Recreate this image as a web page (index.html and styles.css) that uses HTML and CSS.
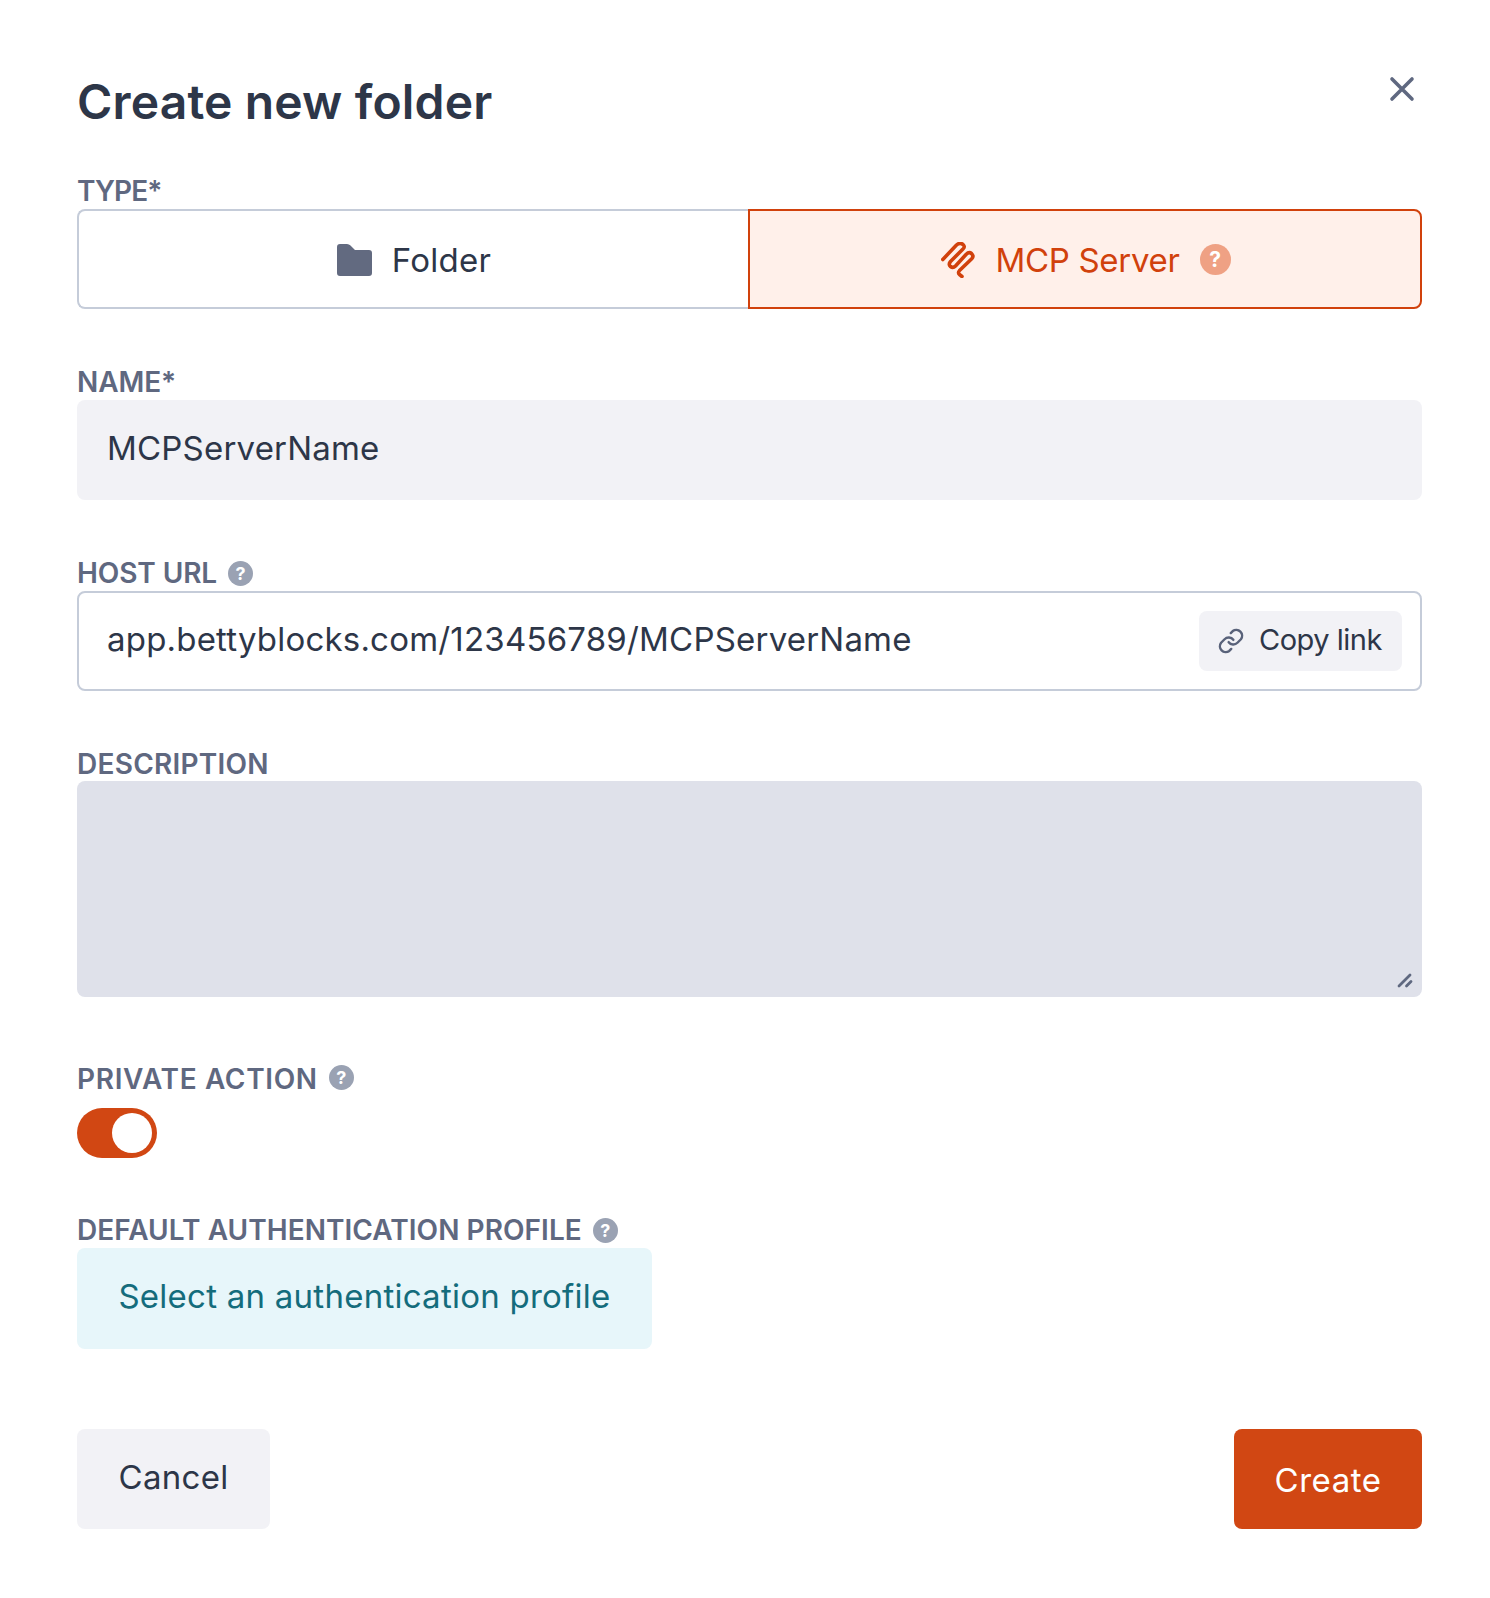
FILE: index.html
```html
<!DOCTYPE html>
<html lang="en">
<head>
  <meta charset="UTF-8">
  <title>Create new folder</title>
  <link rel="stylesheet" href="styles.css">
</head>
<body>
  <div class="dialog">
    <div class="dialog-head">
      <h1>Create new folder</h1>
      <button class="close-btn" aria-label="Close">
        <svg width="26" height="26" viewBox="0 0 26 26"><path d="M3 3 L23 23 M23 3 L3 23" stroke="#5f6880" stroke-width="3.6" stroke-linecap="round" fill="none"/></svg>
      </button>
    </div>

    <div class="field">
      <label class="field-label label-tight">TYPE*</label>
      <div class="type-switch">
        <div class="type-option">
          <svg class="type-icon" width="35" height="32" viewBox="0 0 35 32"><path d="M0 3 Q0 0 3 0 H10 Q12 0 13.5 1.5 L18 6 H32 Q35 6 35 9 V29 Q35 32 32 32 H3 Q0 32 0 29 Z" fill="#626a80"/></svg>
          <span>Folder</span>
        </div>
        <div class="type-option active">
          <svg class="type-icon" width="34" height="36" viewBox="0 0 34 36"><path d="M1.8 17.5 L15.5 3 Q19 0 22 2.5 Q24.5 4.8 22 7 L9.5 19.5 Q7 22.5 9.5 24.5 Q12 26.5 14.5 24 L25 12.500 Q28 9.500 30.500 11.500 Q33 14 31 16.500 L18.5 28.5 Q16.5 31 18.5 32.5 L21 34.5" stroke="#d1410c" stroke-width="3.6" stroke-linecap="round" stroke-linejoin="round" fill="none"/></svg>
          <span>MCP Server</span>
          <span class="help help-big">?</span>
        </div>
      </div>
    </div>

    <div class="field">
      <label class="field-label">NAME*</label>
      <div class="text-input filled">MCPServerName</div>
    </div>

    <div class="field field-host">
      <label class="field-label">HOST URL <span class="help">?</span></label>
      <div class="text-input outlined">
        <span>app.bettyblocks.com/123456789/MCPServerName</span>
        <button class="copy-btn">
          <svg width="28" height="28" viewBox="0 0 24 24" fill="none" stroke="#59627a" stroke-width="2.1" stroke-linecap="round" stroke-linejoin="round"><path d="M10 13a5 5 0 0 0 7.5.5l3-3a5 5 0 0 0-7-7l-1.700 1.700"/><path d="M14 11a5 5 0 0 0-7.5-.5l-3 3a5 5 0 0 0 7 7l1.700-1.700"/></svg>
          Copy link
        </button>
      </div>
    </div>

    <div class="field">
      <label class="field-label label-wide">DESCRIPTION</label>
      <div class="text-area">
        <svg class="resize-grip" width="16" height="16" viewBox="0 0 16 16"><path d="M2 14 L13 3 M9.5 14 L14 9.5" stroke="#5f6880" stroke-width="2.8" stroke-linecap="round"/></svg>
      </div>
    </div>

    <div class="field field-private">
      <label class="field-label label-wider">PRIVATE ACTION <span class="help raised">?</span></label>
      <div class="toggle"><span class="toggle-knob"></span></div>
    </div>

    <div class="field">
      <label class="field-label label-default">DEFAULT AUTHENTICATION PROFILE <span class="help">?</span></label>
      <button class="select-btn">Select an authentication profile</button>
    </div>

    <div class="dialog-actions">
      <button class="action cancel-btn">Cancel</button>
      <button class="action create-btn">Create</button>
    </div>
  </div>
</body>
</html>
```

FILE: styles.css
```css
* {
  box-sizing: border-box;
}

body {
  margin: 0;
  background: #fff;
  font-family: "Inter", "Noto Sans", sans-serif;
  color: #2d3648;
}

button {
  font-family: inherit;
  border: none;
  cursor: pointer;
}

.dialog {
  width: 1490px;
  height: 1598px;
  padding: 68px 68px 0 77px;
}

.dialog-head {
  display: flex;
  justify-content: space-between;
  align-items: flex-start;
  height: 105px;
  padding-right: 7px;
}

h1 {
  margin: 1px 0 0;
  font-size: 48px;
  line-height: 66px;
  font-weight: 600;
  letter-spacing: 0.15px;
  color: #2d3648;
}

.close-btn {
  padding: 0;
  margin: 8px 0 0;
  background: none;
  width: 26px;
  height: 26px;
}

.field {
  margin-bottom: 55px;
}

.field-host {
  margin-bottom: 54px;
}

.field-label {
  display: flex;
  align-items: center;
  gap: 11px;
  height: 36px;
  font-size: 28px;
  font-weight: 600;
  letter-spacing: -0.1px;
  color: #5f6880;
}

.label-tight {
  letter-spacing: -0.9px;
}

.label-wide {
  padding-top: 2px;
  letter-spacing: 0.25px;
}

.label-wider {
  letter-spacing: 0.65px;
}

.label-default {
  letter-spacing: 0.05px;
}

.help {
  display: inline-flex;
  align-items: center;
  justify-content: center;
  width: 25px;
  height: 25px;
  border-radius: 50%;
  background: #9aa2b3;
  color: #fff;
  font-size: 18px;
  font-weight: 700;
  letter-spacing: 0;
}

.raised {
  margin-top: -4px;
}

.type-switch {
  display: flex;
  width: 1345px;
  height: 100px;
}

.type-option {
  flex: 1;
  display: flex;
  align-items: center;
  justify-content: center;
  gap: 20px;
  padding-top: 1px;
  font-size: 33px;
  letter-spacing: 0.25px;
  border: 2px solid #c5ccd9;
  border-right: none;
  border-radius: 8px 0 0 8px;
}

.type-option.active {
  margin-left: -1px;
  color: #d1410c;
  letter-spacing: -0.3px;
  background: #fff0ea;
  border: 2px solid #d1410c;
  border-radius: 0 8px 8px 0;
}

.active .type-icon {
  margin-left: 2px;
}

.help-big {
  width: 31px;
  height: 31px;
  background: #efa184;
  font-size: 21px;
}

.text-input {
  display: flex;
  align-items: center;
  justify-content: space-between;
  width: 1345px;
  height: 100px;
  padding: 0 20px 4px 30px;
  border-radius: 8px;
  font-size: 33px;
  letter-spacing: 0.2px;
}

.filled {
  background: #f2f2f6;
}

.outlined {
  border: 2px solid #c5ccd9;
  padding-left: 28px;
  padding-right: 18px;
}

.copy-btn {
  display: flex;
  align-items: center;
  gap: 14px;
  height: 60px;
  width: 203px;
  padding: 0 0 4px 18px;
  margin-top: 4px;
  border-radius: 8px;
  background: #f2f2f6;
  color: #2d3648;
  font-size: 29px;
  letter-spacing: -0.5px;
}

.copy-btn svg {
  margin-top: 4px;
}

.text-area {
  position: relative;
  width: 1345px;
  height: 216px;
  background: #dfe1ea;
  border-radius: 8px;
}

.resize-grip {
  position: absolute;
  right: 9px;
  bottom: 9px;
}

.field-private {
  margin-top: 64px;
  margin-bottom: 54px;
}

.toggle {
  display: flex;
  justify-content: flex-end;
  align-items: center;
  width: 80px;
  height: 50px;
  margin-top: 11px;
  padding-right: 5px;
  border-radius: 25px;
  background: #d14713;
}

.toggle-knob {
  width: 40px;
  height: 40px;
  border-radius: 50%;
  background: #fff;
}

.select-btn {
  display: block;
  width: 575px;
  height: 101px;
  padding: 0 0 6px;
  border-radius: 8px;
  background: #e7f6fa;
  color: #146c7c;
  font-size: 33px;
  letter-spacing: 0.25px;
}

.dialog-actions {
  display: flex;
  justify-content: space-between;
  width: 1345px;
  margin-top: 80px;
}

.action {
  height: 100px;
  border-radius: 8px;
  font-size: 33px;
  letter-spacing: 0.3px;
}

.cancel-btn {
  width: 193px;
  padding: 0 0 4px;
  background: #f2f2f6;
  color: #2d3648;
}

.create-btn {
  width: 188px;
  padding: 1px 0 0;
  letter-spacing: 0.5px;
  background: #d14713;
  color: #fff;
}
```
